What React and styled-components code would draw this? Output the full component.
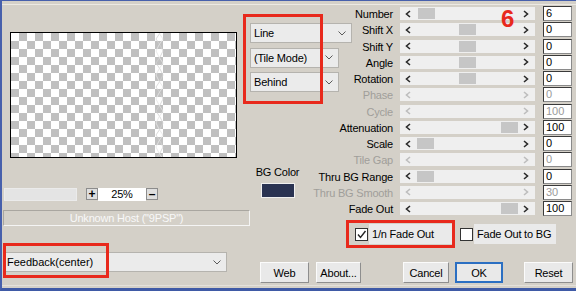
import React from 'react';
import styled, { createGlobalStyle } from 'styled-components';

const Global = createGlobalStyle`
  html, body { margin: 0; padding: 0; background: #d4d0c8; }
  body { font-family: "Liberation Sans", Arial, sans-serif; }
  * { box-sizing: border-box; }
`;

const Dialog = styled.div`
  position: relative;
  width: 576px;
  height: 291px;
  border-left: 2px solid #4760ac;
  border-top: 1px solid #4760ac;
  border-bottom: 3px solid #3f5aa6;
  background:
    linear-gradient(#ece9e3, #ece9e3) 0 3px / 100% 1px no-repeat,
    linear-gradient(#e4e1db, #e4e1db) 0 284px / 100% 1px no-repeat,
    #d4d0c8;
  display: flex;
  font-size: 11px;
  letter-spacing: -0.2px;
  color: #000;
  overflow: hidden;
`;

const LeftPanel = styled.div`
  width: 248px;
  padding-left: 1px;
  display: flex;
  flex-direction: column;
  align-items: flex-start;
`;

const Preview = styled.div`
  position: relative;
  margin: 31px 0 0 7px;
  width: 227px;
  height: 126px;
  border: 1px solid #000;
  background: repeating-conic-gradient(#c0c0c0 0 25%, #ffffff 0 50%) 0 0 / 16px 16px;
`;

const Wave = styled.svg`
  position: absolute;
  left: 0;
  top: 0;
`;

const ZoomRow = styled.div`
  display: flex;
  align-items: center;
  margin-top: 29px;
  height: 14px;
`;

const ZoomField = styled.div`
  margin-left: 1px;
  width: 73px;
  height: 13px;
  background: #e4e4e4;
  border: 1px solid #ebebeb;
`;

const ZoomBtn = styled.div`
  margin-left: ${p => p.$ml || 0}px;
  width: 12px;
  height: 12px;
  border: 1px solid #8c8c8c;
  background: #dedede;
  display: flex;
  align-items: center;
  justify-content: center;
  font-size: 12px;
  font-weight: bold;
  line-height: 1;
`;

const ZoomValue = styled.div`
  width: 48px;
  height: 13px;
  background: #fff;
  text-align: center;
  line-height: 13px;
  font-size: 11px;
`;

const HostBar = styled.div`
  margin-top: 9px;
  width: 247px;
  height: 16px;
  border: 1px solid;
  border-color: #a9a6a0 #f4f4f4 #f4f4f4 #a9a6a0;
  color: #f8f8f8;
  text-align: center;
  line-height: 14px;
  white-space: nowrap;
`;

const Select = styled.div`
  width: ${p => p.$w}px;
  height: 20px;
  margin-left: ${p => p.$ml || 0}px;
  margin-top: ${p => p.$mt || 0}px;
  border: 1px solid #b5b3ae;
  background: #ebebeb;
  display: flex;
  align-items: center;
  justify-content: space-between;
  padding: 0 5px 0 ${p => p.$pl || 3}px;
  letter-spacing: ${p => p.$ls ?? -0.2}px;
  white-space: nowrap;
`;

const RightPanel = styled.div`
  flex: 1;
  display: flex;
  flex-direction: column;
`;

const ParamsGrid = styled.div`
  display: grid;
  grid-template-columns: 65px 85px 135px 37px;
  grid-template-rows: repeat(13, 16.25px);
  margin-top: 5px;
`;

const Label = styled.div`
  grid-column: 2;
  grid-row: ${p => p.$row};
  justify-self: end;
  padding-right: 7px;
  line-height: 16px;
  white-space: nowrap;
  color: ${p => (p.$disabled ? '#a09e9a' : '#000')};
`;

const Track = styled.div`
  grid-column: 3;
  grid-row: ${p => p.$row};
  position: relative;
  margin-top: 1px;
  height: 13px;
  background: #efefef;
  display: flex;
  align-items: center;
  justify-content: space-between;
  padding: 0 6px 0 5px;
`;

const Thumb = styled.div`
  position: absolute;
  top: 1px;
  left: ${p => p.$left}px;
  width: 17px;
  height: 11px;
  background: #c6c6c6;
`;

const ValueBox = styled.div`
  grid-column: 4;
  grid-row: ${p => p.$row};
  margin-left: 8px;
  width: 29px;
  height: 15px;
  background: #fff;
  border: 1px solid;
  border-color: #3a3a3a #8a8a8a #8a8a8a #3a3a3a;
  padding-left: 2px;
  line-height: 13px;
  color: ${p => (p.$disabled ? '#9a9a9a' : '#000')};
  letter-spacing: 0;
`;

const SelectGroup = styled.div`
  grid-column: 1 / 3;
  grid-row: 2 / 7;
  display: flex;
  flex-direction: column;
  align-items: flex-start;
  gap: 4.5px;
  padding-top: 1px;
  z-index: 1;
`;

const ColorBlock = styled.div`
  grid-column: 1;
  grid-row: 10 / 13;
  width: 55px;
  display: flex;
  flex-direction: column;
  align-items: center;
  padding-top: 13px;
`;

const ColorLabel = styled.div`
  line-height: 14px;
  white-space: nowrap;
`;

const Swatch = styled.div`
  margin-top: 4px;
  width: 34px;
  height: 15px;
  background: #2a3352;
  border: 1px solid #f0f0f0;
`;

const CheckRow = styled.div`
  display: flex;
  margin-top: 7px;
  padding-left: 100px;
  height: 20px;
`;

const CheckControl = styled.div`
  display: flex;
  align-items: center;
  width: ${p => p.$w}px;
  margin-left: ${p => p.$ml || 0}px;
  padding-left: 5px;
  height: 20px;
`;

const Box = styled.div`
  width: 13px;
  height: 13px;
  flex: none;
  border: 1px solid #333;
  background: #fff;
  display: flex;
  align-items: center;
  justify-content: center;
`;

const CheckLabel = styled.div`
  flex: 1;
  height: 20px;
  margin-left: 1px;
  padding-left: 3px;
  background: #eaeaea;
  line-height: 20px;
  white-space: nowrap;
`;

const ButtonRow = styled.div`
  display: flex;
  margin-top: 18px;
  padding-left: 10px;
  height: 21px;
`;

const Button = styled.div`
  width: ${p => p.$w}px;
  margin-left: ${p => p.$ml || 0}px;
  height: 21px;
  background: #e9e9e9;
  border: ${p => (p.$primary ? '2px solid #2b6fc2' : '1px solid')};
  border-color: ${p => (p.$primary ? '#2b6fc2' : '#fbfbfb #8e8e8e #8e8e8e #fbfbfb')};
  display: flex;
  align-items: center;
  justify-content: center;
  white-space: nowrap;
`;

const Annot = styled.div`
  position: absolute;
  left: ${p => p.$x}px;
  top: ${p => p.$y}px;
  width: ${p => p.$w}px;
  height: ${p => p.$h}px;
  border: 3px solid #e8291c;
  pointer-events: none;
  z-index: 5;
`;

const Six = styled.div`
  position: absolute;
  left: 499px;
  top: 6px;
  font-size: 24px;
  line-height: 24px;
  font-weight: bold;
  color: #e8291c;
  letter-spacing: 0;
  z-index: 5;
`;

const Chevron = () => (
  <svg width="8" height="5" viewBox="0 0 8 5">
    <polyline points="0.5,0.5 4,4 7.5,0.5" fill="none" stroke="#5a5a5a" strokeWidth="1" />
  </svg>
);

const Arrow = ({ dir, disabled }) => (
  <svg width="6" height="8" viewBox="0 0 6 8">
    <polyline
      points={dir === 'left' ? '5,1 1.5,4 5,7' : '1,1 4.5,4 1,7'}
      fill="none"
      stroke={disabled ? '#bdbdbd' : '#2a2a2a'}
      strokeWidth="1.6"
    />
  </svg>
);

const params = [
  { label: 'Number', value: '6', thumb: 18 },
  { label: 'Shift X', value: '0', thumb: 59 },
  { label: 'Shift Y', value: '0', thumb: 59 },
  { label: 'Angle', value: '0', thumb: 59 },
  { label: 'Rotation', value: '0', thumb: 59 },
  { label: 'Phase', value: '0', disabled: true },
  { label: 'Cycle', value: '100', disabled: true },
  { label: 'Attenuation', value: '100', thumb: 101 },
  { label: 'Scale', value: '0', thumb: 17 },
  { label: 'Tile Gap', value: '0', disabled: true },
  { label: 'Thru BG Range', value: '0', thumb: 17 },
  { label: 'Thru BG Smooth', value: '30', disabled: true },
  { label: 'Fade Out', value: '100', thumb: 101 },
];

const wavePath = (() => {
  let d = 'M149,0';
  for (let y = 0; y < 126; y += 12) {
    d += ` L${y % 24 === 0 ? 145 : 152},${y + 6} L149,${y + 12}`;
  }
  return d;
})();

const wavePath2 = (() => {
  let d = 'M148,0';
  for (let y = 0; y < 126; y += 12) {
    d += ` L${y % 24 === 0 ? 152 : 145},${y + 6} L148,${y + 12}`;
  }
  return d;
})();

export default function App() {
  return (
    <>
      <Global />
      <Dialog>
        <LeftPanel>
          <Preview>
            <Wave width="225" height="124" viewBox="0 0 225 124">
              <path d={wavePath} fill="none" stroke="#d2d2d2" strokeWidth="0.8" />
              <path d={wavePath2} fill="none" stroke="#e6e6e6" strokeWidth="0.8" />
            </Wave>
          </Preview>
          <ZoomRow>
            <ZoomField />
            <ZoomBtn $ml={9}>+</ZoomBtn>
            <ZoomValue>25%</ZoomValue>
            <ZoomBtn>–</ZoomBtn>
          </ZoomRow>
          <HostBar>Unknown Host ("9PSP")</HostBar>
          <Select $w={223} $ml={1} $mt={26} $pl={2} $ls={0}>
            <span>Feedback(center)</span>
            <Chevron />
          </Select>
        </LeftPanel>
        <RightPanel>
          <ParamsGrid>
            {params.map((p, i) => (
              <React.Fragment key={p.label}>
                <Label $row={i + 1} $disabled={p.disabled}>{p.label}</Label>
                <Track $row={i + 1}>
                  <Arrow dir="left" disabled={p.disabled} />
                  {!p.disabled && <Thumb $left={p.thumb} />}
                  <Arrow dir="right" disabled={p.disabled} />
                </Track>
                <ValueBox $row={i + 1} $disabled={p.disabled}>{p.value}</ValueBox>
              </React.Fragment>
            ))}
            <SelectGroup>
              <Select $w={102}>
                <span>Line</span>
                <Chevron />
              </Select>
              <Select $w={89}>
                <span>(Tile Mode)</span>
                <Chevron />
              </Select>
              <Select $w={89}>
                <span>Behind</span>
                <Chevron />
              </Select>
            </SelectGroup>
            <ColorBlock>
              <ColorLabel>BG Color</ColorLabel>
              <Swatch />
            </ColorBlock>
          </ParamsGrid>
          <CheckRow>
            <CheckControl $w={102}>
              <Box>
                <svg width="11" height="11" viewBox="0 0 11 11">
                  <polyline points="2,5.5 4.5,8.5 9.5,2" fill="none" stroke="#222" strokeWidth="1.4" />
                </svg>
              </Box>
              <CheckLabel>1/n Fade Out</CheckLabel>
            </CheckControl>
            <CheckControl $w={101} $ml={3}>
              <Box />
              <CheckLabel>Fade Out to BG</CheckLabel>
            </CheckControl>
          </CheckRow>
          <ButtonRow>
            <Button $w={49}>Web</Button>
            <Button $w={45} $ml={7}>About...</Button>
            <Button $w={46} $ml={42}>Cancel</Button>
            <Button $w={48} $ml={6} $primary>OK</Button>
            <Button $w={49} $ml={21}>Reset</Button>
          </ButtonRow>
        </RightPanel>
        <Annot $x={241} $y={13} $w={80} $h={90} />
        <Annot $x={1} $y={242} $w={106} $h={35} />
        <Annot $x={344} $y={219} $w={109} $h={28} />
        <Six>6</Six>
      </Dialog>
    </>
  );
}
